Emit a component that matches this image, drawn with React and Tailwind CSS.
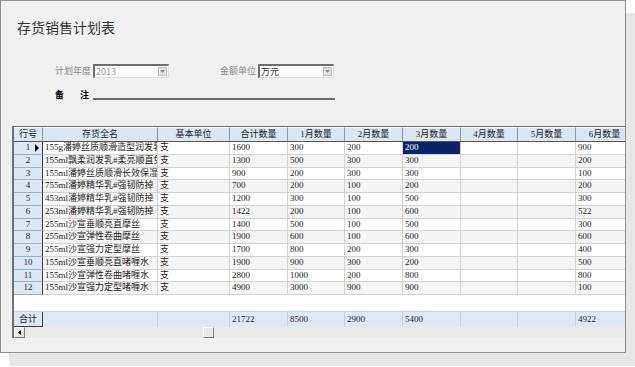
const cols = [
  { key: "name", label: "存货全名", w: "w-[115px]" },
  { key: "unit", label: "基本单位", w: "w-[72px]" },
  { key: "total", label: "合计数量", w: "w-[58px]" },
  { key: "m1", label: "1月数量", w: "w-[57px]" },
  { key: "m2", label: "2月数量", w: "w-[58px]" },
  { key: "m3", label: "3月数量", w: "w-[58px]" },
  { key: "m4", label: "4月数量", w: "w-[57px]" },
  { key: "m5", label: "5月数量", w: "w-[58px]" },
  { key: "m6", label: "6月数量", w: "w-[58px]" },
];

const rows = [
  ["155g潘婷丝质顺滑造型润发乳", "1600", "300", "200", "200", "900"],
  ["155ml飘柔润发乳#柔亮顺直免洗", "1300", "500", "300", "300", "200"],
  ["155ml潘婷丝质顺滑长效保湿润发乳", "900", "200", "300", "300", "100"],
  ["755ml潘婷精华乳#强韧防掉", "700", "200", "100", "200", "200"],
  ["453ml潘婷精华乳#强韧防掉", "1200", "300", "100", "500", "300"],
  ["253ml潘婷精华乳#强韧防掉", "1422", "200", "100", "600", "522"],
  ["255ml沙宣垂顺亮直摩丝", "1400", "500", "100", "500", "300"],
  ["255ml沙宣弹性卷曲摩丝", "1900", "600", "100", "600", "600"],
  ["255ml沙宣强力定型摩丝", "1700", "800", "200", "300", "400"],
  ["155ml沙宣垂顺亮直啫喱水", "1900", "900", "300", "200", "500"],
  ["155ml沙宣弹性卷曲啫喱水", "2800", "1000", "200", "800", "800"],
  ["155ml沙宣强力定型啫喱水", "4900", "3000", "900", "900", "100"],
].map(([name, total, m1, m2, m3, m6]) => ({ name, unit: "支", total, m1, m2, m3, m4: "", m5: "", m6 }));

const totals = { name: "", unit: "", total: "21722", m1: "8500", m2: "2900", m3: "5400", m4: "", m5: "", m6: "4922" };

const font = { fontFamily: '"Liberation Serif", "Noto Sans CJK SC", serif' };

const Select = ({ value, dim }) => (
  <div className="flex h-[14px] w-[76px] border-t-2 border-l-2 border-t-[#6e6e6e] border-l-[#6e6e6e] border-r border-b border-r-[#dcdcdc] border-b-[#dcdcdc] bg-[#fbfbfb]">
    <div className={`flex-1 pl-[1px] text-[9px] leading-[11px] ${dim ? "text-[#9a9a9a]" : "text-[#333]"}`}>{value}</div>
    <div className="my-[1px] mr-[1px] flex w-[9px] items-center justify-center border border-[#bdbdbd] bg-[#e2e2e2]">
      <svg width="5" height="3" viewBox="0 0 5 3"><polygon points="0,0 5,0 2.5,3" fill="#8a8a8a" /></svg>
    </div>
  </div>
);

export default function App() {
  return (
    <div className="h-[367px] w-[635px] overflow-hidden bg-white" style={{ fontFamily: '"Noto Sans CJK SC", sans-serif' }}>
      <div className="flex h-[353px] w-[626px] flex-col border border-[#8e8e8e] bg-[#f0f0f0] pt-[16px] shadow-[9px_13px_0_0_#e6e6e6]">
        <div className="ml-[16px] h-[20px] text-[14px] leading-[20px] text-[#333]">存货销售计划表</div>

        <div className="mt-[27px] flex h-[14px] items-center text-[9px] text-[#8a8a8a]">
          <span className="ml-[54px] w-[38px]">计划年度</span>
          <Select value="2013" dim />
          <span className="ml-[51px] w-[38px]">金额单位</span>
          <Select value="万元" />
        </div>

        <div className="mt-[10px] flex h-[13px] items-end text-[9px] font-bold text-black">
          <span className="ml-[54px] w-[25px] leading-[12px]">备</span>
          <span className="w-[13px] leading-[12px]">注</span>
          <div className="mb-[1px] h-[2px] w-[242px] bg-[#6a6a6a]" />
        </div>

        <div className="ml-[11px] mt-[25px] flex h-[212px] flex-col overflow-hidden border-t border-l-2 border-[#707070] bg-white" style={font}>
          <div className="flex h-[15px] shrink-0 border-b border-[#555] bg-[#dbe6f5] text-[9px] leading-[13px] text-[#222]">
            <div className="w-[29px] shrink-0 border-r border-t border-r-[#8796ac] border-t-white text-center">行号</div>
            {cols.map((c) => (
              <div key={c.key} className={`${c.w} shrink-0 border-r border-t border-r-[#8796ac] border-t-white text-center`}>{c.label}</div>
            ))}
          </div>

          {rows.map((r, i) => (
            <div key={i} className={`flex h-[12.75px] shrink-0 text-[9px] leading-[11px] ${i % 2 ? "bg-[#f4f4f4]" : "bg-white"}`}>
              <div className="relative w-[29px] shrink-0 border-r border-b border-r-[#3c3c3c] border-b-[#9fb0c6] bg-[#dce7f6] text-center text-[#222]">
                {i + 1}
                {i === 0 && (
                  <svg className="absolute right-[3px] top-[2px]" width="4" height="8" viewBox="0 0 4 8"><polygon points="0,0 4,4 0,8" fill="#000" /></svg>
                )}
              </div>
              {cols.map((c) => {
                const sel = i === 0 && c.key === "m3";
                return (
                  <div
                    key={c.key}
                    className={`${c.w} shrink-0 overflow-hidden whitespace-nowrap border-r border-b border-[#d2d2d2] pl-[2px] ${sel ? "bg-[#0a246a] text-white" : "text-[#222]"}`}
                  >
                    {r[c.key]}
                  </div>
                );
              })}
            </div>
          ))}

          <div className="flex-1" />

          <div className="flex h-[16px] shrink-0 border-t border-[#c9d3e0] text-[9px] leading-[14px] text-[#222]">
            <div className="w-[29px] shrink-0 border-r border-b border-r-[#3c3c3c] border-b-[#3c3c3c] bg-[#dce7f6] text-center">合计</div>
            {cols.map((c) => (
              <div key={c.key} className={`${c.w} shrink-0 border-r border-[#c6d0de] bg-[#dce8f8] pl-[2px]`}>{totals[c.key]}</div>
            ))}
          </div>

          <div className="flex h-[11px] shrink-0 bg-[#ebe9e5]">
            <div className="flex w-[11px] items-center justify-center border border-t-white border-l-white border-r-[#7a7a7a] border-b-[#7a7a7a] bg-[#ece9e4]">
              <svg width="3" height="5" viewBox="0 0 3 5"><polygon points="3,0 0,2.5 3,5" fill="#000" /></svg>
            </div>
            <div className="ml-[178px] w-[11px] border border-t-white border-l-white border-r-[#7a7a7a] border-b-[#7a7a7a] bg-[#ece9e4]" />
          </div>
        </div>
      </div>
    </div>
  );
}
